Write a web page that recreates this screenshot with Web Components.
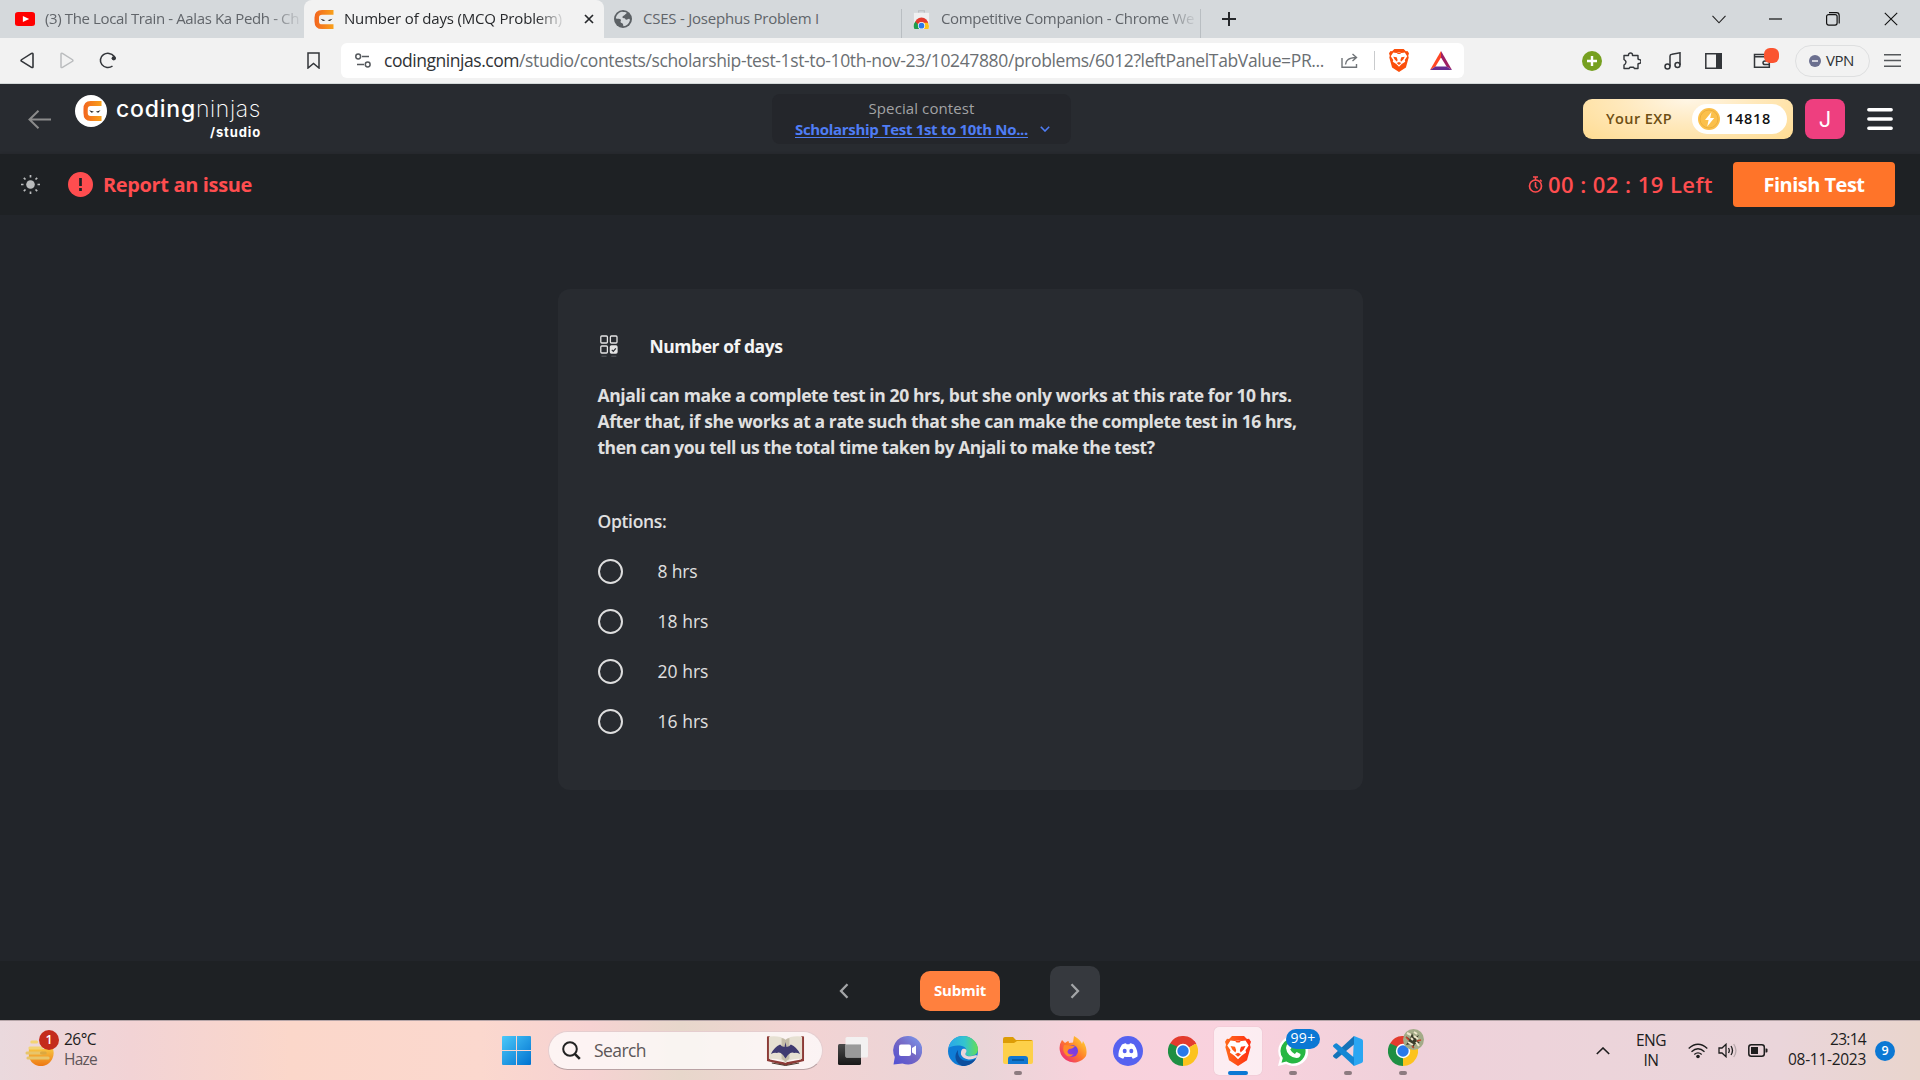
<!DOCTYPE html>
<html lang="en">
<head>
<meta charset="utf-8">
<title>Number of days (MCQ Problem)</title>
<style>
html,body{margin:0;height:100%;overflow:hidden;background:#222529}
body{font-family:"Open Sans","Noto Sans",sans-serif}
</style>
</head>
<body>
<app-screen></app-screen>
<script>
const lion = (a,b) => `<defs><linearGradient id="l"><stop stop-color="${a}"/><stop offset="1" stop-color="${b}"/></linearGradient></defs>
<path fill="url(#l)" d="M7 0h12l3 3 2-.3 2 3-1 3 .6 2.500-3.600 13L13 30 4 24.200.4 11.200 1 8.700 0 5.700l2-3 2 .3z"/>
<path fill="#fff" d="M5.500 4.500l4 .6 3.500-.7 3.500.7 4-.6 3.200 5-3.200 4.700.6 2.300-4.600 3.200-3.500 3.500-3.500-3.500-4.600-3.200.6-2.300L2.300 9.500z"/>
<path fill="url(#l)" d="M5.500 10l4.500.8 1.200 3.500-.8 2.200-3-2.700zM20.500 10l-4.500.8-1.200 3.500.8 2.200 3-2.700zM10 4.800h6l-1.500 1.700h-3zM10 18.200l3-1.400 3 1.400-3 2.600z"/>`;
const chrome = `<path d="M15 15L2 7.500A15 15 0 0 1 28 7.500z" fill="#e33b2e"/><path d="M15 15L28 7.500A15 15 0 0 1 15 30z" fill="#fcc31e"/><path d="M15 15V30A15 15 0 0 1 2 7.500z" fill="#1f8f43"/><path d="M15 8h13.300l-1.800-3-6-1H8z" fill="#e33b2e"/><path d="M9 18.500L2 7.500l7 3z" fill="#1f8f43"/><path d="M21 18.500L15 30l2-8z" fill="#fcc31e"/><circle cx="15" cy="15" r="7.200" fill="#fff"/><circle cx="15" cy="15" r="5.700" fill="#2a79ea"/>`;
const ICONS = {
youtube:[16,14,`<rect width="16" height="14" rx="2.500" fill="#f00"/><path d="M6.300 4v6l5-3z" fill="#fff"/>`],
ninja:[20,20,`<defs><linearGradient id="n"><stop stop-color="#f2641f"/><stop offset="1" stop-color="#f9a11b"/></linearGradient></defs><path d="M19.500 0v5H8Q5 5 5 8v4q0 3 3 3h11.500v5H8Q.5 20 .5 12V8Q.5 0 8 0z" fill="url(#n)"/><path d="M6.500 9.200l5 1.500-2.500 1zM18.500 9.200l-5 1.500 2.500 1z" fill="#222"/>`],
close:[10,10,`<path d="M1 1l8 8M9 1l-8 8" stroke="#26282b" stroke-width="1.700"/>`],
closeThin:[14,14,`<path d="M.8.8l12.400 12.400M13.200.8L.8 13.200" stroke="#111" stroke-width="1.100"/>`],
globe:[18,18,`<circle cx="9" cy="9" r="9" fill="#5c6165"/><path d="M8 1.800c2 .4 3.500 0 4.500.8.5 1.200-1 1.600-1.800 2.400-.9 1-2.300 1-2.300 2.200 0 1 1.300.8 2.200 1 .8.300.7 1.500 1.800 1.600 1.200.1 1.600-1.200 2.800-1 .6.400.8 1 .7 1.600C15 13.800 12.500 16 9.600 16.300c-.6-.8-.2-1.800-.8-2.600-.6-.7-1.800-.6-2.200-1.500-.3-1 .8-1.700.2-2.600C5.800 8.600 4 9.300 1.900 8.500 2 5.500 4.700 2.200 8 1.800z" fill="#d5d9dc"/>`],
store:[18,20,`<path d="M6 3V.8h6V3" fill="none" stroke="#b9bdc0" stroke-width="1.200"/><path d="M1 3h16v17H1z" fill="#eff0f1"/><path d="M1.800 15a7.200 7.200 0 0 1 14.400 0z" fill="#e33b2e"/><path d="M1.500 20a8 8 0 0 1 1-8l4 4.500V20z" fill="#1f9d4b"/><path d="M16.500 20a8 8 0 0 0-.8-6.500H11V20z" fill="#fcc31e"/><circle cx="9" cy="16.500" r="3.800" fill="#fff"/><circle cx="9" cy="16.500" r="3" fill="#2a79ea"/>`],
plus:[14,14,`<path d="M7 0v14M0 7h14" stroke="#26282b" stroke-width="2"/>`],
chev:[14,9,`<path d="M.5.8l6.500 7 6.500-7" fill="none" stroke="#222" stroke-width="1.100"/>`],
min:[13,2,`<path d="M0 1h13" stroke="#111" stroke-width="1.200"/>`],
restore:[14,14,`<rect x=".6" y="2.600" width="10.500" height="10.500" rx="2" fill="none" stroke="#111" stroke-width="1.200"/><path d="M3 .6h7.400Q13.200.6 13.200 3.400v8" fill="none" stroke="#111" stroke-width="1.200"/>`],
back:[14,18,`<path d="M13 2.500v13q0 1.500-1.500.8L1.500 9.800q-.8-.8 0-1.600L11.500 1.500Q13 1 13 2.500z" fill="none" stroke="#33363a" stroke-width="1.600"/>`],
fwd:[14,18,`<path d="M1 2.500v13q0 1.500 1.500.8l10-6.500q.8-.8 0-1.600L2.500 1.500Q1 1 1 2.500z" fill="none" stroke="#babcbe" stroke-width="1.500"/>`],
reload:[18,18,`<path d="M13.500 14.800A7.500 7.500 0 1 1 15 4.500l1 2" fill="none" stroke="#33363a" stroke-width="1.600"/><circle cx="14.800" cy="6.700" r="2.200" fill="#33363a"/>`],
bookmark:[13,17,`<path d="M1 1h11v15l-5.500-4.500L1 16z" fill="none" stroke="#33363a" stroke-width="1.500"/>`],
tune:[16,15,`<g fill="none" stroke="#55595d" stroke-width="1.500"><circle cx="3.200" cy="3.500" r="2.400"/><path d="M7 3.500h7M2 11.500h7"/><circle cx="12.700" cy="11.500" r="2.400"/></g>`],
share:[18,16,`<path d="M1 5v9.200h14.500V11M4.500 11.500C5 6.500 8 5 15 4.500M11.500 1l4 3.500-4 3.500" fill="none" stroke="#707478" stroke-width="1.400"/>`],
lion:[26,30,lion('#fb4f0b','#fb4f0b')],
lionBig:[26,30,lion('#ff6b1c','#ff2d12')],
bat:[22,19,`<path d="M11 0L0 19l5.500-3.500L11 6.500z" fill="#ff4724"/><path d="M11 0l11 19-5.500-3.500L11 6.500z" fill="#9e1f63"/><path d="M0 19h22l-5.500-3.500h-11z" fill="#662d91"/>`],
addc:[20,20,`<circle cx="10" cy="10" r="10" fill="#76a020"/><path d="M10 5v10M5 10h10" stroke="#fff" stroke-width="2.400"/>`],
puzzle:[18,18,`<path d="M1 3.500h4.500V3a1.900 1.900 0 0 1 4 0v.5H15V7l1 .5a2 2 0 0 1 0 4l-1 .5v4.500h-3.500l-1-1.200H7l-1 1.200H1V13l1.200-1q1.500-2 0-3.500L1 7.500z" fill="none" stroke="#33363a" stroke-width="1.400" stroke-linejoin="round"/>`],
music:[18,18,`<g fill="none" stroke="#33363a" stroke-width="1.500"><circle cx="3.500" cy="14.500" r="2.500"/><circle cx="13.500" cy="13" r="2.500"/><path d="M6 14.500V4q0-1.500 2-1.800l8-1.400V13"/></g>`],
side:[17,16,`<path d="M.8.8h15.400v14.400H.8z" fill="none" stroke="#33363a" stroke-width="1.500"/><path d="M11 0h6v16h-6z" fill="#33363a"/>`],
wallet:[18,16,`<path d="M14.500 3.500V1.500h-13v12.700h14.800V3.800H1.500M17 8h-5q-2 0-2 1.800t2 1.800h5" fill="none" stroke="#33363a" stroke-width="1.500"/>`],
vpn:[12,12,`<circle cx="6" cy="6" r="6" fill="#6b6f8f"/><path d="M3 6h6" stroke="#fff" stroke-width="1.400"/>`],
burger:[17,13,`<path d="M0 .8h17M0 6.500h17M0 12.200h17" stroke="#55585b" stroke-width="1.400"/>`],
arrow:[23,19,`<path d="M23 9.500H1.500M10.500.8L1.500 9.500l9 8.700" fill="none" stroke="#8b8b8b" stroke-width="2"/>`],
caret:[10,6,`<path d="M.8.8L5 5 9.200.8" fill="none" stroke="#4f7df5" stroke-width="1.600"/>`],
coin:[22,22,`<circle cx="11" cy="11" r="11" fill="#fbc04b"/><circle cx="11" cy="11" r="9" fill="none" stroke="#e9a93a" stroke-width=".8"/><path d="M13.500 4L7 12h3.600L9.200 18.500 16.200 10h-4z" fill="#fff"/>`],
menu:[26,22,`<path d="M1.800 1.800h22.400M1.800 11h22.400M1.800 20.200h22.400" stroke="#fff" stroke-width="3.400" stroke-linecap="round"/>`],
sun:[19,19,`<circle cx="9.500" cy="9.500" r="4.300" fill="#b9bbbc"/><path d="M9.500 0v2.500M9.500 16.500V19M0 9.500h2.500M16.500 9.500H19M2.800 2.800l1.700 1.700M14.500 14.500l1.700 1.700M2.800 16.200l1.700-1.700M14.500 4.500l1.700-1.700" stroke="#b9bbbc" stroke-width="1.700"/>`],
alert:[25,25,`<circle cx="12.500" cy="12.500" r="12.500" fill="#ff4d4f"/><path d="M12.500 6v8M12.500 16v3" stroke="#1e2124" stroke-width="2.700"/>`],
timer:[15,17,`<circle cx="7.500" cy="10" r="6" fill="none" stroke="#ff4d4f" stroke-width="1.700"/><path d="M5 1h5M7.500 1v3M12 3.800l1.700 1.700M7.500 6v4.500l2 2" stroke="#ff4d4f" stroke-width="1.600" fill="none"/>`],
grid:[18,22,`<g fill="none" stroke="#e4e4e4" stroke-width="1.300"><rect x=".8" y="1" width="6.600" height="7" rx="1"/><rect x="10.400" y="1" width="6.600" height="7" rx="1"/><rect x=".8" y="11" width="6.600" height="7" rx="1"/><rect x="10.400" y="11" width="6.600" height="7" rx="1" fill="#e4e4e4"/></g><path d="M11.800 14.800l1.500 1.500 2.500-3" stroke="#282b30" stroke-width="1.200" fill="none"/><path d="M1.500 21.200h5M11.300 21.200h5" stroke="#5b5e62"/>`],
prev:[10,16,`<path d="M8.500 1.200L2 8l6.500 6.800" fill="none" stroke="#a3a5a7" stroke-width="2.300"/>`],
next:[10,16,`<path d="M1.500 1.200L8 8l-6.500 6.800" fill="none" stroke="#a3a5a7" stroke-width="2.300"/>`],
haze:[30,30,`<defs><linearGradient id="h" y2="1" x2="0"><stop stop-color="#f7c341"/><stop offset="1" stop-color="#ee7712"/></linearGradient></defs><path d="M4 13h25A13 13 0 0 1 4 21z" fill="url(#h)"/><g stroke-linecap="round" stroke-width="3"><path d="M7 6h5M5 12h12" stroke="#f3d475"/><path d="M2 17h15M3 22h21" stroke="#e8c56a"/><path d="M17 17h4" stroke="#dba840"/></g>`],
win:[29,29,`<defs><linearGradient id="w" x2="1" y2="1"><stop stop-color="#4cc9f9"/><stop offset="1" stop-color="#0072d0"/></linearGradient></defs><path fill="url(#w)" d="M1 0h13v14H0V1q0-1 1-1zM15 0h13q1 0 1 1v13H15zM0 15h14v14H1q-1 0-1-1zM15 15h14v13q0 1-1 1H15z"/>`],
mag:[19,19,`<circle cx="8" cy="8" r="6.800" fill="none" stroke="#222" stroke-width="2"/><path d="M12.800 12.800l5 5" stroke="#222" stroke-width="2.600"/>`],
book:[40,31,`<path d="M1 1.500l3-.5v23.500l15.500 3 16.500-3V1l3 .5V26l-19 4.500L1 26z" fill="#8c3a36"/><path d="M3 1.500Q14 0 20 4.500 26 0 37 1.500V24q-11-1-17 4-6-5-17-4z" fill="#e6e0d2"/><path d="M16 3q3 .5 4 2 1-1.500 4-2v21q-3 1-4 3.500-1-2.500-4-3.500z" fill="#c4bca9"/><path d="M20 7l1 5q3-.5 4.500-2.500 6 2.500 9.500 9.500-4-2-6-1-2-1-4 0-2.500 1-5 5.500-2.500-4.500-5-5.500-2-1-4 0-2-1-6 1 3.500-7 9.500-9.500 1.500 2 4.500 2.500z" fill="#3f3a70"/><path d="M6 28l14 2.500L34 28" stroke="#463429" fill="none"/>`],
task:[30,28,`<defs><linearGradient id="t" x2="0" y2="1"><stop stop-color="#4b4b4b"/><stop offset="1" stop-color="#181818"/></linearGradient></defs><rect y="7" width="23" height="21" rx="1.500" fill="url(#t)"/><rect x="7.500" width="22.500" height="20.500" rx="1.500" fill="#f3f3f3" fill-opacity=".92"/><path d="M7.500 7.500H23v13H8.500q-1 0-1-1z" fill="#9a9a9a"/>`],
chat:[29,29,`<defs><linearGradient id="c" x1="1" x2="0" y2="1"><stop stop-color="#7b9df0"/><stop offset=".5" stop-color="#7567c4"/><stop offset="1" stop-color="#5050d4"/></linearGradient></defs><path d="M14.500 0a14.300 14.300 0 1 1-5 27.500L.5 28.500 1.800 21A14.300 14.300 0 0 1 14.500 0z" fill="url(#c)"/><rect x="6" y="8.500" width="12" height="11.500" rx="2" fill="#fff"/><path d="M19 12l4-2.500v9.500l-4-2.500z" fill="#fff"/>`],
edge:[30,30,`<defs><linearGradient id="e" x2="1"><stop stop-color="#2aa7ea"/><stop offset=".55" stop-color="#33c4cf"/><stop offset="1" stop-color="#63de54"/></linearGradient></defs><circle cx="15" cy="15" r="15" fill="#0f7dd6"/><path d="M.5 12C2 4 8 0 15 0c9 0 15 7 15 13 0 5-4 7-8 7-4 0-6-1.500-4-4 1-2 0-5-4-6-5-1-11 0-13.500 2z" fill="url(#e)"/><path d="M10 14c-1 8 5 11 10 11 3 0 6-1 8-2.500C25 28 20 30 15 30 10 29 4 22 10 14z" fill="#0d4f9e"/><path d="M14.500 13c3-1 5 1 3.500 3.500-2 2.500 1 4.500 6 3.500l4.500-1q1 1 0 2.500-4.500 2.500-8 2-6-1-7.500-5-.5-4 1.500-5.500z" fill="#ead5d9"/>`],
folder:[30,27,`<path d="M0 2q0-2 2-2h8l3 3h15q2 0 2 2v8H0z" fill="#dc9c06"/><path d="M0 6h11l3-2h16v21q0 2-2 2H2q-2 0-2-2z" fill="#fdd04a"/><path d="M5 27v-5q0-3 3-3h14q3 0 3 3v5z" fill="#1177d1"/><path d="M9 23h12" stroke="#07508f" stroke-width="1.400"/>`],
firefox:[29,29,`<defs><linearGradient id="f" x1="1" x2="0" y2="1"><stop stop-color="#ffe534"/><stop offset=".5" stop-color="#ff7a2a"/><stop offset="1" stop-color="#e8168b"/></linearGradient><linearGradient id="g" x1="1" x2="0" y2="1"><stop stop-color="#5b44e8"/><stop offset="1" stop-color="#a537d6"/></linearGradient></defs><path d="M4 4l3 3 3-2q1 0 1 2l4-.5 1-6.500q7 4 8 8l1-3q5 8 3 15A14.200 14.200 0 1 1 4 4z" fill="url(#f)"/><circle cx="14" cy="15" r="6" fill="url(#g)"/><path d="M6 9l8 .5 3 1-3 2-3 .5q-3 3 0 5 3 1 5 0-5 5-9 0-3-4-1-9z" fill="#ff8a2a"/>`],
discord:[30,30,`<circle cx="15" cy="15" r="15" fill="#5662f0"/><path d="M9 8.500q3-1.200 4-1.200l.6 1h2.800l.6-1q1 0 4 1.200 4 6 3.500 12-3 2-4.700 2.200l-1.300-2q-3.500.8-7 0l-1.300 2q-1.700-.2-4.700-2.200Q5 14.500 9 8.500z" fill="#fff"/><ellipse cx="11.700" cy="15" rx="2" ry="2.300" fill="#5662f0"/><ellipse cx="18.300" cy="15" rx="2" ry="2.300" fill="#5662f0"/>`],
chrome:[30,30,chrome],
whats:[30,30,`<path d="M15 0a15 15 0 1 1-7 28L0 30l2-8A15 15 0 0 1 15 0z" fill="#fff"/><path d="M15 2.500A12.500 12.500 0 1 1 8.300 25.500L3.500 26.700l1.300-4.600A12.500 12.500 0 0 1 15 2.500z" fill="#27b743"/><path d="M10 8l2-.3 1.700 4-1.500 1.900q1.500 3 4.600 4.300l1.900-1.900 3.800 1.900q.4 3.400-4.100 4.200Q9 20.500 8 12q.2-3 2-4z" fill="#fff"/>`],
vscode:[30,30,`<path d="M21 0l7.500 3Q30 3.500 30 5v20q0 1.500-1.500 2L21 30l-1-8z" fill="#2aa6f2"/><path d="M21 0v8.500L4 22.500Q3 23 2 22.300L.5 21q-1-1 0-2z" fill="#1573b8"/><path d="M21 30v-8.500L4 7.500Q3 7 2 7.700L.5 9q-1 1 0 2z" fill="#1487d4"/>`],
avatar:[21,21,`<circle cx="10.500" cy="10.500" r="10.500" fill="#a3ab88"/><path d="M3 7l4 3 2-6 2 5 5-3-3 5 4 3-5 1-2 4-2-4-5 1 3-5z" fill="#3a3b2b"/><path d="M4 4l4 2M11 7l4 3M5 13l5 3M13 13l3 4M11 3l3 2M8 9l2 2" stroke="#eee6cc" stroke-width="2"/><path d="M3 8l3 3M14 12l4-1M9 17l2 2" stroke="#c0442d" stroke-width="1.500"/>`],
up:[14,8,`<path d="M.8 7L7 1l6.200 6" fill="none" stroke="#1d1d1d" stroke-width="1.600"/>`],
wifi:[20,16,`<g fill="none" stroke="#1d1d1d" stroke-width="1.300"><path d="M.7 5.500Q10-3 19.300 5.500M3.500 8.700q6.500-6 13 0M6.300 11.500q3.700-3.300 7.400 0"/></g><circle cx="10" cy="13.500" r="1.800" fill="#1d1d1d"/>`],
vol:[20,15,`<g fill="none" stroke="#1d1d1d" stroke-width="1.300"><path d="M1 5h3L8 1.300v12.400L4 10H1zM10.500 5q1.600 2.500 0 5M13 3q3 4.500 0 9"/><path d="M15.700 1q4.500 6.500 0 13" stroke="#b8a8ac"/></g>`],
bat2:[20,13,`<rect x=".8" y=".8" width="15.500" height="11.400" rx="2.500" fill="none" stroke="#1d1d1d" stroke-width="1.500"/><rect x="3" y="3" width="7" height="7" fill="#1d1d1d"/><path d="M17.500 4.500h1q1 0 1 1v2q0 1-1 1h-1z" fill="#1d1d1d"/>`]
};
function define(name, html, setup){
  const tpl = document.createElement('template'); tpl.innerHTML = html;
  customElements.define(name, class extends HTMLElement{
    constructor(){ super(); this.attachShadow({mode:'open'}).append(tpl.content.cloneNode(true)); }
    connectedCallback(){ setup && setup(this, this.shadowRoot); }
  });
}
/* w, h: drawn size; l: left gap */
define('ui-icon', `<style>:host{display:block;flex:none;line-height:0}svg{display:block}</style>`, (el,root)=>{
  const [vw,vh,body] = ICONS[el.getAttribute('n')];
  const w = el.getAttribute('w')||vw, h = el.getAttribute('h')||vh;
  if(el.hasAttribute('l')) el.style.marginLeft = el.getAttribute('l')+'px';
  if(!root.querySelector('svg')) root.innerHTML += `<svg width="${w}" height="${h}" viewBox="0 0 ${vw} ${vh}" preserveAspectRatio="none">${body}</svg>`;
});
/* single line of text tracked to the measure given by w */
define('fit-text', `<style>:host{display:block;flex:none;white-space:pre;line-height:1.3}span{display:inline-block}:host([u]) span{text-decoration:underline;text-underline-offset:2px}</style><span><slot></slot></span>`, (el,root)=>{
  const w = +el.getAttribute('w'), s = root.querySelector('span');
  el.style.fontSize = el.getAttribute('s')+'px';
  if(el.hasAttribute('l')) el.style.marginLeft = el.getAttribute('l')+'px';
  el.style.width = w+'px';
  s.style.letterSpacing = '0';
  const n = el.textContent.length;
  s.style.letterSpacing = ((w - s.getBoundingClientRect().width)/n)+'px';
});

define('browser-tab', `<style>
:host{display:flex;align-items:center;box-sizing:border-box;height:38px;flex:none;color:#61656a}
:host([active]){background:#f2f2f2;border-radius:8px 8px 0 0;color:#27292c}
:host([fade]) ::slotted(fit-text){-webkit-mask:linear-gradient(90deg,#000 88%,#0002);mask:linear-gradient(90deg,#000 88%,#0002)}
:host([sep])::after{content:"";width:1px;height:29px;background:#b9bec2;margin:9px 0 0 auto}
</style><slot></slot>`);

define('browser-tabs', `<style>:host{display:flex;align-items:center;height:38px;background:#d5d9dc;overflow:hidden}</style>
<browser-tab fade style="width:304px"><ui-icon n="youtube" w="20" h="14" l="15"></ui-icon><fit-text s="15" w="254" l="10">(3) The Local Train - Aalas Ka Pedh - Ch</fit-text></browser-tab>
<browser-tab active fade style="width:300px"><ui-icon n="ninja" w="20" h="19" l="10"></ui-icon><fit-text s="15" w="218" l="10">Number of days (MCQ Problem)</fit-text><ui-icon n="close" l="22"></ui-icon></browser-tab>
<browser-tab sep style="width:298px"><ui-icon n="globe" l="10"></ui-icon><fit-text s="15" w="176" l="11">CSES - Josephus Problem I</fit-text></browser-tab>
<browser-tab sep fade style="width:299px"><ui-icon n="store" w="17" h="19" l="11"></ui-icon><fit-text s="15" w="253" l="11">Competitive Companion - Chrome We</fit-text></browser-tab>
<ui-icon n="plus" l="21"></ui-icon>
<ui-icon n="chev" l="476"></ui-icon><ui-icon n="min" l="43"></ui-icon><ui-icon n="restore" l="44"></ui-icon><ui-icon n="closeThin" l="44"></ui-icon>`);

define('browser-toolbar', `<style>
:host{display:flex;align-items:center;height:45px;background:#f2f2f2;border-bottom:1px solid #d3d8d8}
.url{display:flex;align-items:center;width:1123px;height:35px;border-radius:6px;background:#fff;margin-left:21px;color:#6b6f73}
b{font-weight:400;color:#303336}i{width:1px;height:19px;background:#c9cbcd;margin-left:15px}
.vpn{display:flex;align-items:center;box-sizing:border-box;width:75px;height:32px;border:1.500px solid #dedfe0;border-radius:16px;margin-left:24px;color:#2d3033}
.wallet{position:relative;margin-left:31px}.wallet::after{content:"";position:absolute;left:11px;top:-5px;width:15px;height:15px;border-radius:6px;background:#fb5430}
</style>
<ui-icon n="back" l="20" h="17"></ui-icon><ui-icon n="fwd" l="26" h="17"></ui-icon><ui-icon n="reload" l="25" h="17"></ui-icon><ui-icon n="bookmark" l="190"></ui-icon>
<div class="url"><ui-icon n="tune" l="14"></ui-icon>
<fit-text s="17.500" w="135" l="13"><b>codingninjas.com</b></fit-text><fit-text s="17.500" w="805">/studio/contests/scholarship-test-1st-to-10th-nov-23/10247880/problems/6012?leftPanelTabValue=PR...</fit-text>
<ui-icon n="share" l="17"></ui-icon><i></i><ui-icon n="lion" w="20" h="23" l="14"></ui-icon><ui-icon n="bat" l="21"></ui-icon></div>
<ui-icon n="addc" l="118"></ui-icon><ui-icon n="puzzle" l="21"></ui-icon><ui-icon n="music" l="23"></ui-icon><ui-icon n="side" l="23"></ui-icon>
<div class="wallet"><ui-icon n="wallet"></ui-icon></div>
<div class="vpn"><ui-icon n="vpn" l="13"></ui-icon><fit-text s="15" w="28" l="5">VPN</fit-text></div>
<ui-icon n="burger" l="14"></ui-icon>`);

define('site-header', `<style>
:host{display:flex;align-items:center;height:70px;background:#282b30}
.logo{display:flex;align-self:flex-start;margin:11px 0 0 24px}
.disc{width:32px;height:32px;border-radius:50%;background:#fff;display:flex;align-items:center;justify-content:center}
.word{display:flex;flex-direction:column;align-items:flex-end;font-family:Inter,Lato,sans-serif;color:#fff;margin-left:9px}
.word div{display:flex;line-height:1}.word fit-text{line-height:29px}
.contest{display:flex;flex-direction:column;align-items:center;justify-content:center;box-sizing:border-box;width:299px;height:50px;border-radius:8px;background:#24262b;margin-left:511px;color:#a2a3a5}
.link{display:flex;align-items:center;font-weight:700;color:#4f7df5;margin:1px 0 0 2px}
.exp{display:flex;align-items:center;box-sizing:border-box;width:210px;height:40px;border-radius:9px;margin-left:512px;background:radial-gradient(ellipse at 50% 0,#fff6e6,#ffe9bd 45%,#ffdc92 100%);font-weight:600;color:#6e4f14}
.pts{display:flex;align-items:center;width:95px;height:30px;border-radius:15px;background:#fff;margin-left:20px;color:#111}
.me{width:40px;height:40px;border-radius:8px;background:#ee3f7f;color:#fff;margin-left:12px;display:flex;align-items:center;justify-content:center;font:22px Inter,sans-serif}
</style>
<ui-icon n="arrow" l="28"></ui-icon>
<div class="logo"><div class="disc"><ui-icon n="ninja" w="19" h="20" l="2"></ui-icon></div>
<div class="word"><div><fit-text s="23" w="80" style="font-weight:500">coding</fit-text><fit-text s="23" w="65" style="font-weight:200">ninjas</fit-text></div><fit-text s="13" w="51" style="line-height:17px;font-weight:700">/studio</fit-text></div></div>
<div class="contest"><fit-text s="15" w="106">Special contest</fit-text><div class="link"><fit-text s="15" w="233" u>Scholarship Test 1st to 10th No...</fit-text><ui-icon n="caret" l="12"></ui-icon></div></div>
<div class="exp"><fit-text s="14.5" w="66" l="23">Your EXP</fit-text><div class="pts"><ui-icon n="coin" l="6"></ui-icon><fit-text s="14.5" w="45" l="6">14818</fit-text></div></div>
<div class="me">J</div><ui-icon n="menu" l="22"></ui-icon>`);

define('test-bar', `<style>
:host{display:flex;align-items:center;height:61px;background:#1e2124;color:#ff4d4f;font-weight:700;box-shadow:0 1px 3px #1e2124}
.finish{display:flex;align-items:center;justify-content:center;width:162px;height:45px;border-radius:4px;background:#ff7429;color:#fff;margin-left:20px}
</style>
<ui-icon n="sun" l="21"></ui-icon><ui-icon n="alert" l="28"></ui-icon><fit-text s="20" w="149" l="10">Report an issue</fit-text>
<ui-icon n="timer" l="1276"></ui-icon><fit-text s="22" w="165" l="5" style="font-weight:650">00 : 02 : 19 Left</fit-text><div class="finish"><fit-text s="20" w="101">Finish Test</fit-text></div>`);

define('answer-option', `<style>:host{display:flex;align-items:center;height:50px}i{box-sizing:border-box;width:25px;height:25px;border:2px solid #dedede;border-radius:50%;margin-right:35px}</style><i></i><slot></slot>`);

define('question-card', `<style>
:host{display:block;box-sizing:border-box;width:805px;height:501px;border-radius:12px;background:#282b30;color:#e0e0e0;padding:42px 40px 0}
.title{display:flex;align-items:center;height:30px;font-weight:700;color:#f4f4f4}
.body{margin-top:21px;font-weight:700}.body fit-text{line-height:26px}
.opts{margin-top:45px;line-height:32px;font-weight:600;display:block;height:32px}
answer-option{font-weight:500}
answer-option:first-of-type{margin-top:9px}
</style>
<div class="title"><ui-icon n="grid" l="2" h="22"></ui-icon><fit-text s="17.500" w="133" l="32">Number of days</fit-text></div>
<div class="body"><fit-text s="17.500" w="694">Anjali can make a complete test in 20 hrs, but she only works at this rate for 10 hrs.</fit-text>
<fit-text s="17.500" w="699">After that, if she works at a rate such that she can make the complete test in 16 hrs,</fit-text>
<fit-text s="17.500" w="557">then can you tell us the total time taken by Anjali to make the test?</fit-text></div>
<fit-text class="opts" s="17.500" w="69">Options:</fit-text>
<answer-option><fit-text s="17.500" w="40">8 hrs</fit-text></answer-option>
<answer-option><fit-text s="17.500" w="51">18 hrs</fit-text></answer-option>
<answer-option><fit-text s="17.500" w="51">20 hrs</fit-text></answer-option>
<answer-option><fit-text s="17.500" w="51">16 hrs</fit-text></answer-option>`);

define('problem-nav', `<style>
:host{display:flex;align-items:center;height:59px;background:#1e2124}
.go{display:flex;align-items:center;justify-content:center;width:80px;height:40px;border-radius:10px;background:#ff803e;color:#fff;font-weight:700;margin-left:71px}
.nx{display:flex;align-items:center;justify-content:center;width:50px;height:50px;border-radius:10px;background:#36393e;margin-left:50px}
</style><ui-icon n="prev" l="839"></ui-icon><div class="go"><fit-text s="15" w="52">Submit</fit-text></div><div class="nx"><ui-icon n="next"></ui-icon></div>`);

define('task-app', `<style>
:host{position:relative;display:flex;align-items:center;justify-content:center;flex:none;width:55px;height:60px}
:host([on])::before{content:"";position:absolute;left:3.500px;top:6px;width:48px;height:48px;border-radius:5px;background:#fff9;box-shadow:0 0 1px #0003}
:host([run])::after,:host([on])::after{content:"";position:absolute;bottom:6px;left:23.500px;width:8px;height:4px;border-radius:2px;background:#8d7b80}
:host([on])::after{left:17.500px;width:20px;background:#0b78d4}
::slotted(*){position:relative}
</style><slot></slot><slot name="badge"></slot>`);

define('task-bar', `<style>
:host{display:flex;align-items:center;height:59px;border-top:1px solid #b5a5a8;color:#1d1d1d;background:linear-gradient(90deg,#ead9dd 0,#f2d3d5 130px,#fbd7ca 290px,#fbd8ce 480px,#f6d2d2 590px,#e7d7cb 680px,#f2d3d3 800px,#e9d5d8 980px,#f8d2dc 1090px,#f9d2de 1240px,#efd1da 1410px,#ecd4da 1600px,#ead5da 1780px,#e9d5cd 1920px)}
.w{position:relative;margin-left:25px}.n{display:flex;align-items:center;justify-content:center;width:20px;height:20px;border-radius:50%;color:#fff;font-size:12.500px;font-weight:600}
.w .n{position:absolute;left:14px;top:-6px;background:#c42b1c}
.col{display:flex;flex-direction:column;margin-top:-4px}.col fit-text{line-height:20px}
.search{display:flex;align-items:center;box-sizing:border-box;width:275px;height:39px;border-radius:20px;background:#fffb;border:1px solid #e5cdcf;border-bottom-color:#b9a2a4;margin-left:17px;color:#5c5758}
.b{position:absolute;left:21px;top:8px;display:flex;justify-content:center;align-items:center;width:34px;height:20px;border-radius:10px;background:#0b78d4;color:#fff}
</style>
<div class="w"><ui-icon n="haze" w="29"></ui-icon><div class="n">1</div></div>
<div class="col" style="margin-left:10px"><fit-text s="15.500" w="32">26°C</fit-text><fit-text s="15.500" w="33" style="color:#5f5659">Haze</fit-text></div>
<ui-icon n="win" l="405"></ui-icon>
<div class="search"><ui-icon n="mag" l="13"></ui-icon><fit-text s="17.500" w="52" l="13">Search</fit-text><ui-icon n="book" l="120" w="39"></ui-icon></div>
<div style="width:2px"></div>
<task-app><ui-icon n="task"></ui-icon></task-app><task-app><ui-icon n="chat"></ui-icon></task-app><task-app><ui-icon n="edge"></ui-icon></task-app><task-app run><ui-icon n="folder"></ui-icon></task-app><task-app><ui-icon n="firefox"></ui-icon></task-app><task-app><ui-icon n="discord"></ui-icon></task-app><task-app><ui-icon n="chrome"></ui-icon></task-app><task-app on><ui-icon n="lionBig"></ui-icon></task-app><task-app run><ui-icon n="whats"></ui-icon><div class="b" slot="badge" style="position:absolute"><fit-text s="14" w="25">99+</fit-text></div></task-app><task-app run><ui-icon n="vscode"></ui-icon></task-app><task-app run><ui-icon n="chrome"></ui-icon><ui-icon slot="badge" n="avatar" style="position:absolute;left:28px;top:8px"></ui-icon></task-app>
<ui-icon n="up" l="166"></ui-icon>
<div class="col" style="margin-left:26px;margin-top:-2px;align-items:center"><fit-text s="15.500" w="30">ENG</fit-text><fit-text s="15.500" w="15">IN</fit-text></div>
<ui-icon n="wifi" l="22"></ui-icon><ui-icon n="vol" l="10"></ui-icon><ui-icon n="bat2" l="10"></ui-icon>
<div class="col" style="margin-left:20px;align-items:flex-end"><fit-text s="15.500" w="36">23:14</fit-text><fit-text s="15.500" w="78">08-11-2023</fit-text></div>
<div class="n" style="background:#0b78d4;margin-left:9px">9</div>`);

define('app-screen', `<style>:host{display:flex;flex-direction:column;width:1920px;height:1080px}
browser-tabs,browser-toolbar,site-header,test-bar,problem-nav,task-bar{flex:none}
main{flex:1;background:#22252a;display:flex;flex-direction:column;align-items:center}question-card{margin-top:74px}</style>
<browser-tabs></browser-tabs><browser-toolbar></browser-toolbar><site-header></site-header><test-bar></test-bar>
<main><question-card></question-card></main><problem-nav></problem-nav><task-bar></task-bar>`);
</script>
</body>
</html>
